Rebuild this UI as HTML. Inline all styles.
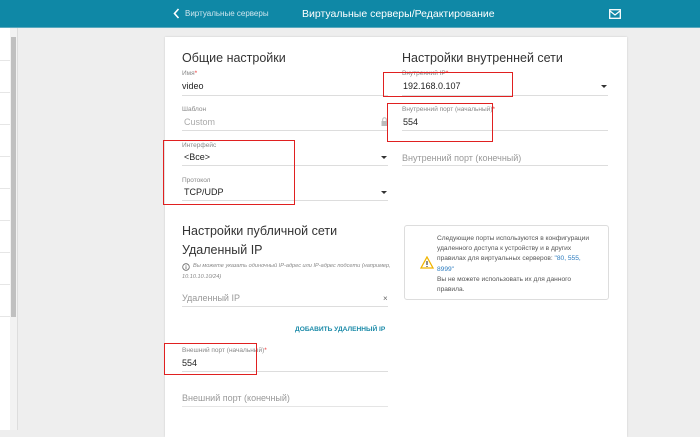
<!DOCTYPE html><html><head><meta charset="utf-8"><style>
*{margin:0;padding:0;box-sizing:border-box}
body{width:700px;height:430px;overflow:hidden;background:#eeeeee;font-family:"Liberation Sans","DejaVu Sans",sans-serif;position:relative;color:#222}
.a{position:absolute;white-space:nowrap}
.hdr{position:absolute;left:0;top:0;width:700px;height:28px;background:#0f88a6;border-bottom:1px solid #5aa9be}
.card{position:absolute;left:165px;top:37px;width:462px;height:400px;background:#fff;box-shadow:0 0 2px rgba(0,0,0,.15)}
.h{font-size:12.5px;color:#333}
.lb{font-size:6.5px;color:#888}
.v{font-size:9px;color:#222}
.ph{font-size:9px;color:#999}
.ln{position:absolute;height:1px;background:#ddd}
.red{position:absolute;border:1.3px solid #e02020}
.arr{position:absolute;width:0;height:0;border-left:3px solid transparent;border-right:3px solid transparent;border-top:3px solid #333}
</style></head><body>
<div style="position:absolute;left:0;top:28px;width:10px;height:402px;background:#fff"></div>
<div style="position:absolute;left:10px;top:29px;width:7px;height:401px;background:#f2f2f2"></div>
<div style="position:absolute;left:11px;top:37px;width:5px;height:280px;background:#c0c0c0"></div>
<div style="position:absolute;left:17px;top:28px;width:1px;height:402px;background:#ddd"></div>
<div class="ln" style="left:0;top:60px;width:10px;background:#e6e6e6"></div>
<div class="ln" style="left:0;top:92px;width:10px;background:#e6e6e6"></div>
<div class="ln" style="left:0;top:124px;width:10px;background:#e6e6e6"></div>
<div class="ln" style="left:0;top:156px;width:10px;background:#e6e6e6"></div>
<div class="ln" style="left:0;top:188px;width:10px;background:#e6e6e6"></div>
<div class="ln" style="left:0;top:220px;width:10px;background:#e6e6e6"></div>
<div class="ln" style="left:0;top:252px;width:10px;background:#e6e6e6"></div>
<div class="ln" style="left:0;top:284px;width:10px;background:#e6e6e6"></div>
<div class="ln" style="left:0;top:316px;width:10px;background:#e6e6e6"></div>
<div class="hdr"></div>
<svg class="a" style="left:173px;top:8px" width="7" height="11"><path d="M5.5 1L1.5 5.5L5.5 10" stroke="#fff" stroke-width="1.6" fill="none"/></svg>
<div class="a" style="left:185px;top:9px;font-size:8px;color:#cfe6ee">Виртуальные серверы</div>
<div class="a" style="left:302px;top:8px;font-size:10.5px;color:#fff">Виртуальные серверы/Редактирование</div>
<svg class="a" style="left:609px;top:9px" width="12" height="10"><rect x="0.7" y="0.7" width="10.6" height="8.6" fill="none" stroke="#fff" stroke-width="1.3"/><path d="M1 2L6 6L11 2" stroke="#fff" stroke-width="1.2" fill="none"/></svg>
<div class="card"></div>
<div class="a h" style="left:182px;top:51px">Общие настройки</div>
<div class="a h" style="left:402px;top:51px">Настройки внутренней сети</div>
<div class="a lb" style="left:182px;top:70px">Имя<span style="color:#e33">*</span></div>
<div class="a v" style="left:182px;top:81px">video</div>
<div class="ln" style="left:182px;top:95px;width:206px"></div>
<div class="a lb" style="left:182px;top:106px">Шаблон</div>
<div class="a ph" style="left:184px;top:117px;color:#aaa">Custom</div>
<svg class="a" style="left:381px;top:117px" width="7" height="9"><rect x="0.5" y="4" width="6" height="5" fill="#bbb"/><path d="M1.7 4V2.5a1.8 1.8 0 0 1 3.6 0V4" stroke="#bbb" fill="none"/></svg>
<div class="ln" style="left:182px;top:130px;width:206px"></div>
<div class="a lb" style="left:182px;top:142px">Интерфейс</div>
<div class="a v" style="left:184px;top:152px">&lt;Все&gt;</div>
<div class="arr" style="left:381px;top:156px"></div>
<div class="ln" style="left:182px;top:165px;width:206px"></div>
<div class="a lb" style="left:182px;top:177px">Протокол</div>
<div class="a v" style="left:184px;top:187px">TCP/UDP</div>
<div class="arr" style="left:381px;top:191px"></div>
<div class="ln" style="left:182px;top:200px;width:206px"></div>
<div class="a lb" style="left:402px;top:70px">Внутренний IP<span style="color:#e33">*</span></div>
<div class="a v" style="left:403px;top:81px">192.168.0.107</div>
<div class="arr" style="left:601px;top:85px"></div>
<div class="ln" style="left:402px;top:95px;width:206px"></div>
<div class="a lb" style="left:402px;top:106px">Внутренний порт (начальный)<span style="color:#e33">*</span></div>
<div class="a v" style="left:403px;top:117px">554</div>
<div class="ln" style="left:402px;top:130px;width:206px"></div>
<div class="a ph" style="left:402px;top:153px">Внутренний порт (конечный)</div>
<div class="ln" style="left:402px;top:165px;width:206px"></div>
<div class="a h" style="left:182px;top:224px">Настройки публичной сети</div>
<div class="a h" style="left:182px;top:243px">Удаленный IP</div>
<svg class="a" style="left:182px;top:263px" width="8" height="8"><circle cx="4" cy="4" r="3.3" fill="none" stroke="#666" stroke-width=".8"/><path d="M4 3.3V6M4 2v.6" stroke="#666" stroke-width=".8"/></svg>
<div class="a" style="left:193px;top:263px;font-size:5.6px;color:#888;font-style:italic">Вы можете указать одиночный IP-адрес или IP-адрес подсети (например,</div>
<div class="a" style="left:182px;top:274px;font-size:5.6px;color:#888;font-style:italic">10.10.10.10/24)</div>
<div class="a ph" style="left:182px;top:293px">Удаленный IP</div>
<div class="a" style="left:383px;top:294px;font-size:8px;color:#666">×</div>
<div class="ln" style="left:182px;top:306px;width:206px"></div>
<div class="a" style="left:295px;top:326px;font-size:6.6px;font-weight:bold;color:#1a8aa8">ДОБАВИТЬ УДАЛЕННЫЙ IP</div>
<div class="a lb" style="left:182px;top:347px">Внешний порт (начальный)<span style="color:#e33">*</span></div>
<div class="a v" style="left:182px;top:358px">554</div>
<div class="ln" style="left:182px;top:371px;width:206px"></div>
<div class="a ph" style="left:182px;top:393px">Внешний порт (конечный)</div>
<div class="ln" style="left:182px;top:406px;width:206px;background:#e5e5e5"></div>
<div style="position:absolute;left:404px;top:225px;width:205px;height:75px;border:1px solid #ddd;border-radius:3px"></div>
<svg class="a" style="left:420px;top:256px" width="14" height="13"><path d="M7 1L13 12H1Z" fill="none" stroke="#f0b400" stroke-width="1.3"/><path d="M7 5V9M7 10v1" stroke="#333" stroke-width="1.1"/></svg>
<div class="a" style="left:437px;top:234px;font-size:6.6px;line-height:10.2px;color:#555">Следующие порты используются в конфигурации<br>удаленного доступа к устройству и в других<br>правилах для виртуальных серверов: <span style="color:#2b7bbf">"80, 555,<br>8999"</span><br>Вы не можете использовать их для данного<br>правила.</div>
<div class="red" style="left:163px;top:140px;width:132px;height:65px"></div>
<div class="red" style="left:383px;top:72px;width:130px;height:25px"></div>
<div class="red" style="left:387px;top:103px;width:106px;height:39px"></div>
<div class="red" style="left:164px;top:343px;width:93px;height:32px"></div>
</body></html>
